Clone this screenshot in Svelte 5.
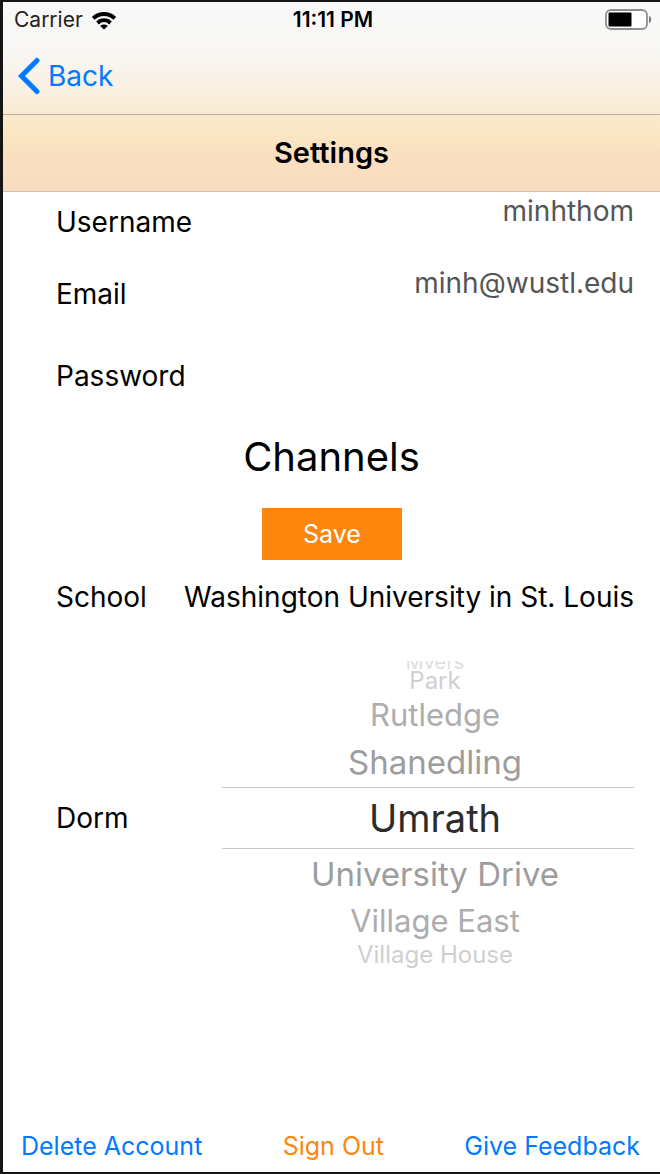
<script>
  const dorms = [
    'Myers',
    'Park',
    'Rutledge',
    'Shanedling',
    'Umrath',
    'University Drive',
    'Village East',
    'Village House'
  ];

  let username = $state('minhthom');
  let email = $state('minh@wustl.edu');
  let password = $state('');
  let dorm = $state('Umrath');

  // Rows of the wheel fade and shrink with their distance from the selection.
  let rows = $derived(
    dorms.map((name, i) => ({
      name,
      distance: Math.min(4, Math.abs(i - dorms.indexOf(dorm)))
    }))
  );
</script>

<div class="screen">
  <header>
    <div class="status">
      <span class="carrier">
        Carrier
        <svg width="26" height="19" viewBox="0 0 26 19" aria-hidden="true">
          <g fill="none" stroke="#000" stroke-width="4">
            <path d="M2.200 7.400C8.200 1.500 17.800 1.500 23.800 7.400" />
            <path d="M6.500 12c3.900-3.700 9.100-3.700 13 0" />
          </g>
          <path d="M13 18.600l-3.800-3.700c2.200-1.900 5.400-1.900 7.600 0z" />
        </svg>
      </span>
      <time>11:11 PM</time>
      <svg class="battery" width="48" height="22" viewBox="0 0 48 22" aria-hidden="true">
        <rect x="2" y="1" width="41" height="19" rx="5" fill="#fff" stroke="#8e8e8c" stroke-width="1.8" />
        <rect x="4.500" y="3.500" width="23" height="14" rx="1" />
        <path d="M45 7c3 .9 3 6.100 0 7z" fill="#7d7d7b" />
      </svg>
    </div>
    <nav>
      <button class="back" type="button">
        <svg width="24" height="38" viewBox="0 0 24 38" aria-hidden="true">
          <path d="M20 3.500L4.500 19l15.500 15.500" fill="none" stroke="currentColor" stroke-width="5" stroke-linecap="round" />
        </svg>
        Back
      </button>
    </nav>
    <h1>Settings</h1>
  </header>

  <main>
    <div class="field">
      <label for="username">Username</label>
      <input id="username" type="text" bind:value={username} />
    </div>
    <div class="field">
      <label for="email">Email</label>
      <input id="email" type="email" bind:value={email} />
    </div>
    <div class="field password">
      <label for="password">Password</label>
      <input id="password" type="password" bind:value={password} />
    </div>

    <h2>Channels</h2>
    <button class="save" type="button">Save</button>

    <div class="school">
      <span>School</span>
      <span>Washington University in St. Louis</span>
    </div>

    <div class="dorm">
      <span id="dorm-label">Dorm</span>
      <div class="wheel" role="radiogroup" aria-labelledby="dorm-label">
        {#each rows as row (row.name)}
          <label class="row d{row.distance}">
            <input type="radio" name="dorm" value={row.name} bind:group={dorm} />
            {row.name}
          </label>
        {/each}
      </div>
    </div>
  </main>

  <footer>
    <button type="button">Delete Account</button>
    <button type="button" class="signout">Sign Out</button>
    <button type="button">Give Feedback</button>
  </footer>
</div>

<style>
  :global(body) {
    margin: 0;
  }

  .screen {
    box-sizing: border-box;
    min-height: 100vh;
    display: flex;
    flex-direction: column;
    border: solid #151416;
    border-width: 2px 0 2px 3px;
    background: #fff;
    color: #000;
    font-family: Inter, 'Liberation Sans', sans-serif;
    font-size: 28px;
    line-height: 36px;
  }

  button,
  input {
    font: inherit;
    border: 0;
    padding: 0;
    margin: 0;
    background: none;
  }

  button {
    color: #007aff;
    cursor: pointer;
  }

  header {
    background: linear-gradient(#f8f8f8 0, #f8f7f5 48px, #faefe0 92px, #f9ead0 112px, #fae6c3 132px, #f9dfbf 158px, #fadcc1 100%);
  }

  .status {
    display: grid;
    grid-template-columns: 1fr auto 1fr;
    align-items: center;
    height: 36px;
    padding: 0 8px 0 11px;
    font-size: 21px;
  }

  .carrier {
    display: flex;
    align-items: center;
    gap: 8px;
    color: #222;
  }

  time {
    font-weight: 600;
  }

  .battery {
    justify-self: end;
  }

  nav {
    display: flex;
    align-items: center;
    height: 76px;
    padding-left: 14px;
    border-bottom: 1px solid #bbb0a0;
  }

  .back {
    display: flex;
    align-items: center;
    gap: 7px;
  }

  h1 {
    margin: 0;
    padding: 20px 0;
    border-bottom: 1px solid #ccc0b8;
    font-size: 29px;
    font-weight: 600;
    text-align: center;
  }

  main {
    flex: 1;
    display: flex;
    flex-direction: column;
    padding: 0 26px 0 53px;
  }

  .field {
    display: flex;
    justify-content: space-between;
    height: 72px;
    gap: 24px;
  }

  .field label {
    padding-top: 12px;
  }

  .field input {
    flex: 1;
    min-width: 0;
    height: 38px;
    color: #555;
    text-align: right;
    outline: none;
  }

  .password {
    padding-top: 10px;
  }

  h2 {
    margin: 13px 27px 25px 0;
    font-size: 40px;
    font-weight: 400;
    line-height: 52px;
    text-align: center;
  }

  .save {
    align-self: center;
    width: 140px;
    height: 52px;
    margin-right: 26px;
    background: #ff860d;
    color: #fff;
    font-size: 25px;
  }

  .school {
    display: flex;
    justify-content: space-between;
    padding-top: 19px;
  }

  .dorm {
    display: flex;
    align-items: center;
    justify-content: space-between;
    padding-top: 46px;
  }

  .wheel {
    flex: 0 1 412px;
    padding-bottom: 8px;
  }

  .row {
    display: flex;
    align-items: flex-end;
    justify-content: center;
    padding-left: 14px;
    white-space: nowrap;
    cursor: pointer;
  }

  .row input {
    appearance: none;
    width: 0;
  }

  .d0 {
    height: 60px;
    border: solid #c8c8c8;
    border-width: 1px 0;
    color: #2c2c2c;
    font-size: 38px;
    line-height: 60px;
  }

  .d1 {
    height: 50px;
    color: #9d9d9d;
    font-size: 33px;
    line-height: 50px;
  }

  .d2 {
    height: 44px;
    color: #adadad;
    font-size: 31px;
    line-height: 44px;
  }

  .d3 {
    height: 24px;
    color: #cfcfcf;
    font-size: 24px;
    line-height: 24px;
  }

  /* The outermost row is turning out of sight: only its lower half shows. */
  .d4 {
    height: 8px;
    overflow: hidden;
    color: #dedede;
    font-size: 20px;
    line-height: 14px;
  }

  footer {
    display: flex;
    justify-content: space-between;
    padding: 0 20px 8px 18px;
    font-size: 25px;
  }

  .signout {
    color: #ff860d;
  }
</style>
